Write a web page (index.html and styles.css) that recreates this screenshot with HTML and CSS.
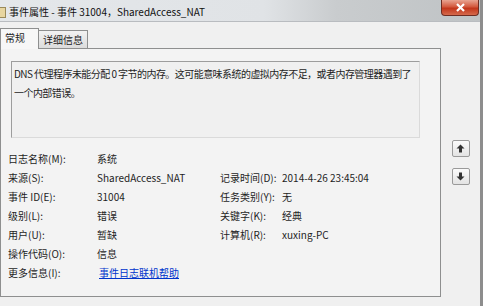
FILE: index.html
```html
<!DOCTYPE html>
<html lang="zh-CN">
  <head>
    <meta charset="UTF-8" />
    <title>事件属性</title>
    <link rel="stylesheet" href="styles.css">
  </head>
  <body>
    <div class="window">
      <div class="titlebar">
        <span class="app-icon"></span>
        <span class="title">事件属性 - 事件 31004，SharedAccess_NAT</span>
        <span class="close">
          <svg width="11" height="9" viewBox="0 0 11 9">
            <path d="M2 1 L9 8 M9 1 L2 8" stroke="#fff" stroke-width="2.2" />
          </svg>
        </span>
      </div>
      <div class="body">
        <div class="main">
          <div class="tabs">
            <div class="tab active">常规</div>
            <div class="tab">详细信息</div>
          </div>
          <div class="panel">
            <div class="desc">DNS 代理程序未能分配 0 字节的内存。这可能意味系统的虚拟内存不足，或者内存管理器遇到了<br>一个内部错误。</div>
            <div class="fields">
              <span>日志名称(M):</span><span>系统</span><span></span><span></span>
              <span>来源(S):</span><span>SharedAccess_NAT</span><span>记录时间(D):</span><span>2014-4-26 23:45:04</span>
              <span>事件 ID(E):</span><span>31004</span><span>任务类别(Y):</span><span>无</span>
              <span>级别(L):</span><span>错误</span><span>关键字(K):</span><span>经典</span>
              <span>用户(U):</span><span>暂缺</span><span>计算机(R):</span><span>xuxing-PC</span>
              <span>操作代码(O):</span><span>信息</span><span></span><span></span>
              <span>更多信息(I):</span><a class="link" href="#">事件日志联机帮助</a><span></span><span></span>
            </div>
          </div>
        </div>
        <div class="side">
          <button class="arrow">
            <svg width="9" height="9" viewBox="0 0 9 9"><path d="M4.5 0.5 L8.5 4.5 L6 4.5 L6 8.5 L3 8.5 L3 4.5 L0.5 4.5 Z" fill="#333" /></svg>
          </button>
          <button class="arrow">
            <svg width="9" height="9" viewBox="0 0 9 9"><path d="M4.5 8.5 L8.5 4.5 L6 4.5 L6 0.5 L3 0.5 L3 4.5 L0.5 4.5 Z" fill="#333" /></svg>
          </button>
        </div>
      </div>
    </div>
  </body>
</html>
```
FILE: styles.css
```css
html,
body {
  margin: 0;
  padding: 0;
}
body {
  font-family: "Noto Sans CJK SC", "Noto Sans", sans-serif;
  font-size: 10px;
  color: #1e1e1e;
}
.window {
  width: 483px;
  height: 306px;
  background: #f0f0f0;
  border-right: 3px solid #8d8d8d;
  box-sizing: border-box;
  display: flex;
  flex-direction: column;
  overflow: hidden;
}
.titlebar {
  height: 22px;
  display: flex;
  align-items: flex-start;
  background: linear-gradient(90deg, #e4e7ea 0%, #e0e3e6 55%, #c9ccce 70%, #bfc3c5 100%);
  border-bottom: 1px solid #b9bcc0;
  box-sizing: border-box;
}
.app-icon {
  width: 5px;
  height: 9px;
  margin-top: 7px;
  background: #e8d6a0;
  border: 1px solid #9a8a5a;
  border-left: none;
}
.title {
  margin: 4px 0 0 3px;
  font-size: 10px;
  color: #111;
}
.close {
  margin-left: auto;
  margin-right: 1px;
  width: 36px;
  height: 15px;
  display: flex;
  align-items: center;
  justify-content: center;
  background: linear-gradient(#e8a491 0%, #d3593e 45%, #c2361b 55%, #d56a4c 100%);
  border: 1px solid #6f2d22;
  border-top: none;
  border-radius: 0 0 4px 4px;
}
.body {
  flex: 1;
  display: flex;
}
.main {
  width: 441px;
  padding-top: 6px;
  display: flex;
  flex-direction: column;
}
.tabs {
  display: flex;
  align-items: flex-end;
  height: 20px;
  padding-left: 1px;
}
.tab {
  height: 17px;
  padding: 0 4px;
  line-height: 17px;
  border: 1px solid #8e8f8f;
  border-bottom: none;
  background: linear-gradient(#f2f2f2, #dcdcdc);
  margin-left: -1px;
}
.tab.active {
  height: 20px;
  width: 29px;
  line-height: 18px;
  background: #f7f7f7;
  position: relative;
  z-index: 1;
  margin-bottom: -1px;
}
.panel {
  height: 249px;
  border: 1px solid #8e8f8f;
  background: #f3f3f3;
  box-sizing: border-box;
  padding: 12px 20px 0 10px;
}
.desc {
  height: 77px;
  box-sizing: border-box;
  border: 1px solid #dadada;
  border-top-color: #9d9d9d;
  border-left-color: #9d9d9d;
  background: #f0f0f0;
  padding: 2px 0 0 2px;
  line-height: 19px;
  letter-spacing: -0.55px;
  white-space: nowrap;
}
.fields {
  display: grid;
  grid-template-columns: 89px 123px 62px auto;
  grid-auto-rows: 19px;
  align-items: center;
  margin: 11px 0 0 -3px;
}
.link {
  color: #0033cc;
  margin-left: 2px;
}
.side {
  flex: 1;
  display: flex;
  flex-direction: column;
  align-items: center;
  padding-top: 118px;
  gap: 11px;
}
.arrow {
  width: 18px;
  height: 17px;
  padding: 0;
  display: flex;
  align-items: center;
  justify-content: center;
  border: 1px solid #9a9a9a;
  border-radius: 2px;
  background: linear-gradient(#fbfbfb, #e3e3e3);
}
```
